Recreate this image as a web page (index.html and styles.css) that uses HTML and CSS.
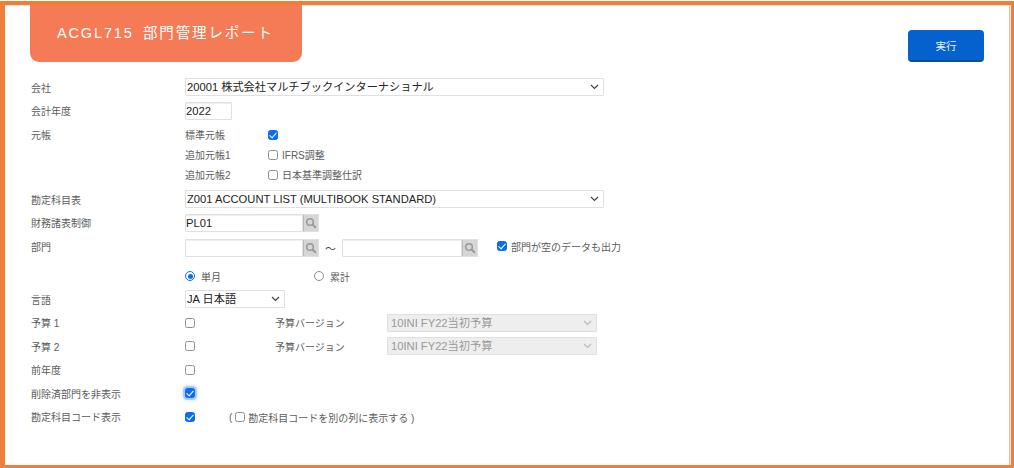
FILE: index.html
```html
<!DOCTYPE html>
<html lang="ja">
<head>
<meta charset="utf-8">
<title>ACGL715 部門管理レポート</title>
<link rel="stylesheet" href="styles.css">
</head>
<body>
<div class="frame">
  <header class="head">
    <h1 class="tab">ACGL715 部門管理レポート</h1>
    <button class="run" type="button">実行</button>
  </header>
  <form class="form">
    <div class="row"><span class="label">会社</span><select class="sel wide"><option>20001 株式会社マルチブックインターナショナル</option></select></div>
    <div class="row"><span class="label">会計年度</span><input class="txt year" value="2022"></div>
    <div class="ledger">
      <div class="sub"><span class="label">元帳</span><span class="sub-name">標準元帳</span><input type="checkbox" class="cb" checked></div>
      <div class="sub"><span class="label"></span><span class="sub-name">追加元帳1</span><label class="cbl"><input type="checkbox" class="cb">IFRS調整</label></div>
      <div class="sub"><span class="label"></span><span class="sub-name">追加元帳2</span><label class="cbl"><input type="checkbox" class="cb">日本基準調整仕訳</label></div>
    </div>
    <div class="row"><span class="label">勘定科目表</span><select class="sel wide"><option>Z001 ACCOUNT LIST (MULTIBOOK STANDARD)</option></select></div>
    <div class="row"><span class="label">財務諸表制御</span>
      <span class="lookup"><input class="txt lk" value="PL01"><span class="lens"><svg viewBox="0 0 12 12" width="12" height="12"><circle cx="5" cy="5" r="3.3" fill="none" stroke="#999" stroke-width="1.5"/><path d="M7.4 7.4L10.8 10.8" stroke="#999" stroke-width="2"/></svg></span></span>
    </div>
    <div class="row"><span class="label">部門</span>
      <span class="lookup low"><input class="txt lk"><span class="lens"><svg viewBox="0 0 12 12" width="12" height="12"><circle cx="5" cy="5" r="3.3" fill="none" stroke="#999" stroke-width="1.5"/><path d="M7.4 7.4L10.8 10.8" stroke="#999" stroke-width="2"/></svg></span></span>
      <span class="tilde low">～</span>
      <span class="lookup low"><input class="txt lk2"><span class="lens"><svg viewBox="0 0 12 12" width="12" height="12"><circle cx="5" cy="5" r="3.3" fill="none" stroke="#999" stroke-width="1.5"/><path d="M7.4 7.4L10.8 10.8" stroke="#999" stroke-width="2"/></svg></span></span>
      <label class="cbl empty"><input type="checkbox" class="cb" checked>部門が空のデータも出力</label>
    </div>
    <div class="row radios"><span class="label"></span>
      <label class="rl first"><input type="radio" name="m" class="rd" checked>単月</label>
      <label class="rl"><input type="radio" name="m" class="rd">累計</label>
    </div>
    <div class="row"><span class="label">言語</span><select class="sel lang"><option>JA 日本語</option></select></div>
    <div class="row"><span class="label">予算 1</span><input type="checkbox" class="cb solo"><span class="ver">予算バージョン</span><select class="sel budget" disabled><option>10INI FY22当初予算</option></select></div>
    <div class="row"><span class="label">予算 2</span><input type="checkbox" class="cb solo"><span class="ver">予算バージョン</span><select class="sel budget" disabled><option>10INI FY22当初予算</option></select></div>
    <div class="row"><span class="label">前年度</span><input type="checkbox" class="cb"></div>
    <div class="row"><span class="label">削除済部門を非表示</span><input type="checkbox" class="cb focus" checked></div>
    <div class="row"><span class="label">勘定科目コード表示</span><input type="checkbox" class="cb solo2" checked>
      <span class="note">(<input type="checkbox" class="cb">勘定科目コードを別の列に表示する )</span>
    </div>
  </form>
</div>
</body>
</html>
```
FILE: styles.css
```css
* { box-sizing: border-box; }
html, body { margin: 0; height: 100%; background: #fff; }
body {
  padding-top: 1px;
  font-family: "Liberation Sans", "Noto Sans CJK JP", sans-serif;
  font-size: 10px;
  color: #5c5c5c;
  overflow: hidden;
}
.frame {
  height: 467px;
  border: solid #ee7f3b;
  border-width: 4px 3px 3px 5px;
  box-shadow: inset -1px 0 0 #fbe8e0, inset -2px 0 0 #f3b9a0, inset 0 1px 0 #fbe3d8;
  padding: 0 27px 0 25px;
}
.head {
  display: flex;
  justify-content: space-between;
  align-items: flex-start;
  height: 70.25px;
}
.tab {
  margin: 0;
  width: 272px;
  height: 57px;
  padding: 18px 0 0 27px;
  background: #f47b55;
  border-radius: 0 0 9px 9px;
  color: #fff;
  font-size: 14.5px;
  font-weight: 400;
  line-height: 20px;
  letter-spacing: 1.85px;
  word-spacing: 3.5px;
  white-space: nowrap;
}
.run {
  width: 76px;
  height: 32px;
  margin-top: 25px;
  border: 0;
  border-bottom: 2px solid #0b4d9c;
  border-radius: 4px;
  background: #0461cd;
  color: #e8f0fb;
  font: inherit;
  font-size: 10.5px;
}
.row { display: flex; align-items: center; height: 23.5px; }
.label { flex: 0 0 155px; padding-left: 1px; white-space: nowrap; }
.ledger { padding: 2.5px 0; }
.sub { display: flex; align-items: center; height: 20px; }
.sub-name { flex: 0 0 83px; }
.cbl { display: inline-flex; align-items: center; gap: 4px; }
.sel, .txt {
  font-family: inherit;
  font-size: 11.2px;
  color: #222;
  background-color: #fff;
  border: 1px solid #e0e0e0;
  border-radius: 1px;
  margin: 0;
  height: 18px;
  outline: 0;
}
.txt { padding: 0; box-shadow: inset 0 1px 1px #eee; }
.sel {
  appearance: none;
  padding: 0 16px 0 1px;
  background-image: url("data:image/svg+xml,%3Csvg xmlns='http://www.w3.org/2000/svg' width='9' height='6'%3E%3Cpath d='M1 1l3.5 3.5L8 1' fill='none' stroke='%23444' stroke-width='1.2'/%3E%3C/svg%3E");
  background-repeat: no-repeat;
  background-position: right 4px center;
}
.wide { width: 419px; }
.year { width: 47px; }
.lang { width: 100px; }
.budget {
  width: 210px;
  margin-left: 43px;
  background-color: #eee;
  color: #999;
  opacity: 1;
  padding-left: 3px;
  background-image: url("data:image/svg+xml,%3Csvg xmlns='http://www.w3.org/2000/svg' width='9' height='6'%3E%3Cpath d='M1 1l3.5 3.5L8 1' fill='none' stroke='%23bbb' stroke-width='1.2'/%3E%3C/svg%3E");
}
.lookup { display: inline-flex; }
.low { margin-top: 4px; }
.lk { width: 118px; }
.lk2 { width: 120px; }
.lens {
  width: 16px;
  height: 18px;
  display: flex;
  align-items: center;
  justify-content: center;
  background: #d6d6d6;
  border: 1px solid #e0e0e0;
  border-left-color: #bbb;
}
.tilde { width: 23px; text-align: center; font-size: 11px; color: #444; }
.empty { margin-left: 19px; margin-top: 0; }
.cb, .rd {
  appearance: none;
  margin: 0;
  flex: none;
  position: relative;
  width: 10px;
  height: 10px;
  background: #fff;
  border: 1px solid #8d8d8d;
}
.cb { border-radius: 2.5px; }
.rd { border-radius: 50%; }
.cb:checked { background: #0b6cf2; border-color: #0b6cf2; }
.cb:checked::after {
  content: "";
  position: absolute;
  left: 2.4px;
  top: 0;
  width: 3.2px;
  height: 6px;
  border: solid #fff;
  border-width: 0 1.6px 1.6px 0;
  transform: rotate(42deg);
}
.rd:checked { border-color: #0b6cf2; }
.rd:checked::after {
  content: "";
  position: absolute;
  inset: 1.5px;
  border-radius: 50%;
  background: #0b6cf2;
}
.focus { box-shadow: 0 0 0 2px rgba(70, 140, 240, .35), 0 0 3px 3px rgba(70, 140, 240, .2); }
.rl { display: inline-flex; align-items: center; gap: 6px; }
.first { width: 129px; }
.radios { height: 29.5px; padding-top: 7px; }
.ver { margin-left: 80px; width: 69px; white-space: nowrap; }
.solo2 { margin-right: 34px; }
.note { display: inline-flex; align-items: center; gap: 3px; margin-top: 1px; white-space: nowrap; }
```
